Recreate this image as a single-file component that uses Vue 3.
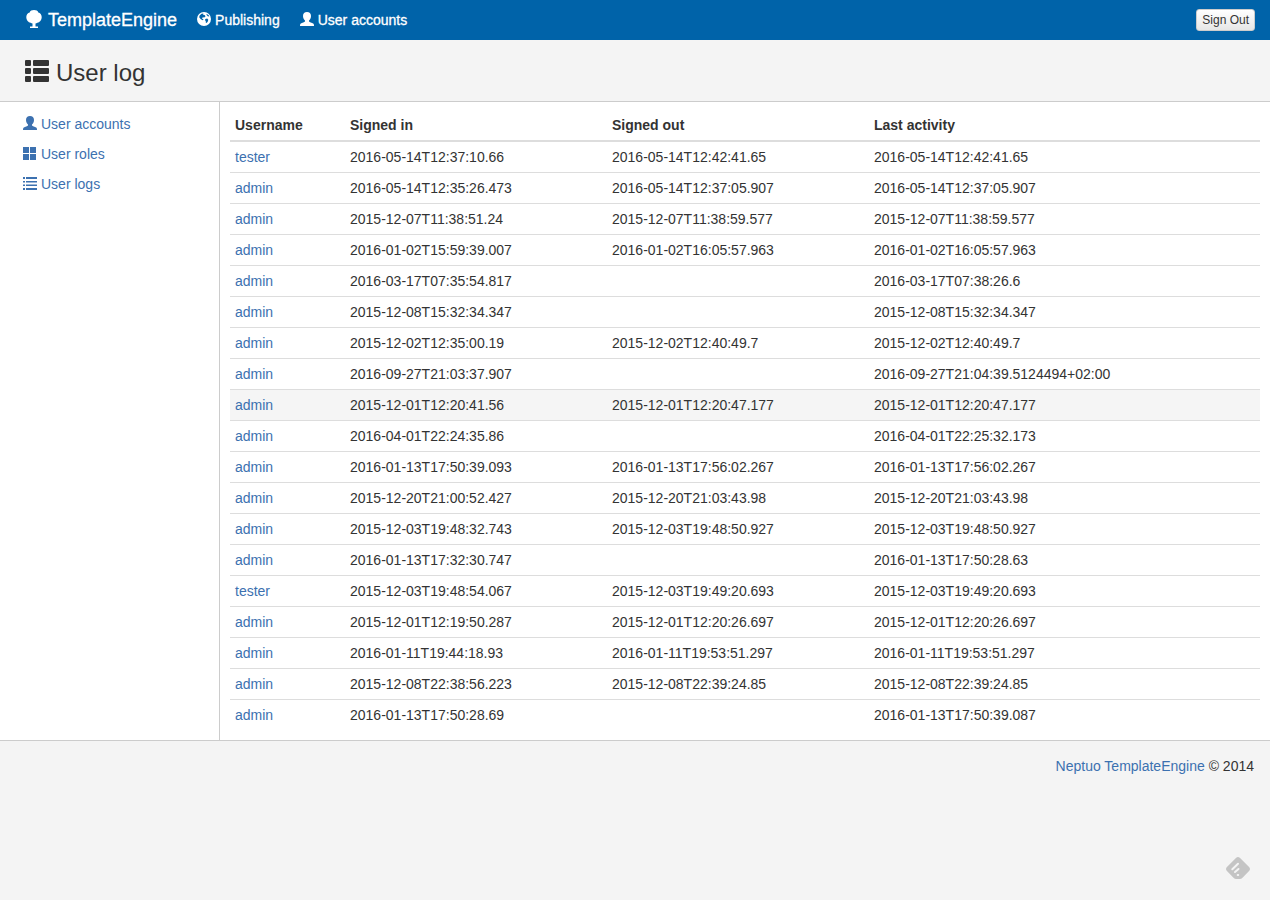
<script setup>
const rows = [
  ['tester', '2016-05-14T12:37:10.66', '2016-05-14T12:42:41.65', '2016-05-14T12:42:41.65'],
  ['admin', '2016-05-14T12:35:26.473', '2016-05-14T12:37:05.907', '2016-05-14T12:37:05.907'],
  ['admin', '2015-12-07T11:38:51.24', '2015-12-07T11:38:59.577', '2015-12-07T11:38:59.577'],
  ['admin', '2016-01-02T15:59:39.007', '2016-01-02T16:05:57.963', '2016-01-02T16:05:57.963'],
  ['admin', '2016-03-17T07:35:54.817', '', '2016-03-17T07:38:26.6'],
  ['admin', '2015-12-08T15:32:34.347', '', '2015-12-08T15:32:34.347'],
  ['admin', '2015-12-02T12:35:00.19', '2015-12-02T12:40:49.7', '2015-12-02T12:40:49.7'],
  ['admin', '2016-09-27T21:03:37.907', '', '2016-09-27T21:04:39.5124494+02:00'],
  ['admin', '2015-12-01T12:20:41.56', '2015-12-01T12:20:47.177', '2015-12-01T12:20:47.177'],
  ['admin', '2016-04-01T22:24:35.86', '', '2016-04-01T22:25:32.173'],
  ['admin', '2016-01-13T17:50:39.093', '2016-01-13T17:56:02.267', '2016-01-13T17:56:02.267'],
  ['admin', '2015-12-20T21:00:52.427', '2015-12-20T21:03:43.98', '2015-12-20T21:03:43.98'],
  ['admin', '2015-12-03T19:48:32.743', '2015-12-03T19:48:50.927', '2015-12-03T19:48:50.927'],
  ['admin', '2016-01-13T17:32:30.747', '', '2016-01-13T17:50:28.63'],
  ['tester', '2015-12-03T19:48:54.067', '2015-12-03T19:49:20.693', '2015-12-03T19:49:20.693'],
  ['admin', '2015-12-01T12:19:50.287', '2015-12-01T12:20:26.697', '2015-12-01T12:20:26.697'],
  ['admin', '2016-01-11T19:44:18.93', '2016-01-11T19:53:51.297', '2016-01-11T19:53:51.297'],
  ['admin', '2015-12-08T22:38:56.223', '2015-12-08T22:39:24.85', '2015-12-08T22:39:24.85'],
  ['admin', '2016-01-13T17:50:28.69', '', '2016-01-13T17:50:39.087'],
]
const activeRow = 8
</script>

<template>
  <div class="page">
    <nav class="navbar">
      <a href="#" class="brand">
        <svg class="icon brand-icon" viewBox="0 0 18 18" aria-hidden="true">
          <path d="M9 0C11.200 0 12.800 .8 13.300 2.400C15.200 2.800 16.700 4.600 16.700 7C16.700 10 14.700 12.500 12.400 12.800C11.700 13.300 11 13.500 10.500 13.600V16.500H13V18H5V16.500H7.500V13.600C7 13.500 6.300 13.300 5.600 12.800C3.300 12.500 1.300 10 1.300 7C1.300 4.600 2.800 2.800 4.700 2.400C5.200 .8 6.800 0 9 0Z" />
        </svg>
        <span>TemplateEngine</span>
      </a>
      <a href="#" class="nav-link">
        <svg class="icon" viewBox="0 0 14 14" aria-hidden="true">
          <circle cx="7" cy="7" r="7" />
          <path class="land" d="M4.600 1.800L6.500 1.400L5.800 2.600L7.600 2.900L8.600 4.200L7.200 5.600L5.800 5.200L5 6.500L6.600 7.600L5.800 8.300L3.800 7.200L2.200 5.200L2.600 3.600ZM9.300 1.700L11.500 3L12.300 4.600L10.800 4.300L9.800 3.200ZM8.400 7L10.200 6.600L11.300 7.800L10.800 9.600L9.700 11L8.600 10.200L8.900 9L7.900 8.200Z" />
        </svg>
        <span>Publishing</span>
      </a>
      <a href="#" class="nav-link">
        <svg class="icon" viewBox="0 0 14 14" aria-hidden="true">
          <path d="M7 0C9.500 0 11 1.500 11 4C11 6 10 7.600 9 8.500V9.500C10.300 10.400 12.700 11 13.500 11.800C14 12.400 14 13.200 14 14H0C0 13.200 0 12.400 .5 11.800C1.300 11 3.700 10.400 5 9.500V8.500C4 7.600 3 6 3 4C3 1.500 4.500 0 7 0Z" />
        </svg>
        <span>User accounts</span>
      </a>
      <button type="button" class="sign-out">Sign Out</button>
    </nav>

    <header class="heading">
      <svg class="heading-icon" viewBox="0 0 24 22" aria-hidden="true">
        <path d="M1 0H5Q6 0 6 1V5Q6 6 5 6H1Q0 6 0 5V1Q0 0 1 0ZM9 0H23Q24 0 24 1V5Q24 6 23 6H9Q8 6 8 5V1Q8 0 9 0ZM1 8H5Q6 8 6 9V13Q6 14 5 14H1Q0 14 0 13V9Q0 8 1 8ZM9 8H23Q24 8 24 9V13Q24 14 23 14H9Q8 14 8 13V9Q8 8 9 8ZM1 16H5Q6 16 6 17V21Q6 22 5 22H1Q0 22 0 21V17Q0 16 1 16ZM9 16H23Q24 16 24 17V21Q24 22 23 22H9Q8 22 8 21V17Q8 16 9 16Z" />
      </svg>
      <h1>User log</h1>
    </header>

    <div class="body">
      <aside class="sidebar">
        <a href="#">
          <svg class="icon" viewBox="0 0 14 14" aria-hidden="true">
            <path d="M7 0C9.500 0 11 1.500 11 4C11 6 10 7.600 9 8.500V9.500C10.300 10.400 12.700 11 13.500 11.800C14 12.400 14 13.200 14 14H0C0 13.200 0 12.400 .5 11.800C1.300 11 3.700 10.400 5 9.500V8.500C4 7.600 3 6 3 4C3 1.500 4.500 0 7 0Z" />
          </svg>
          <span>User accounts</span>
        </a>
        <a href="#">
          <svg class="icon" viewBox="0 0 14 14" aria-hidden="true">
            <path d="M0 1H6V7H0ZM7 1H13V7H7ZM0 8H6V14H0ZM7 8H13V14H7Z" />
          </svg>
          <span>User roles</span>
        </a>
        <a href="#">
          <svg class="icon" viewBox="0 0 14 14" aria-hidden="true">
            <path d="M0 1H2V3H0ZM3 1H14V3H3ZM0 5H2V6.500H0ZM3 5H14V6.500H3ZM0 8.500H2V10H0ZM3 8.500H14V10H3ZM0 12H2V14H0ZM3 12H14V14H3Z" />
          </svg>
          <span>User logs</span>
        </a>
      </aside>

      <main class="content">
        <table>
          <thead>
            <tr>
              <th class="col-user">Username</th>
              <th class="col-time">Signed in</th>
              <th class="col-time">Signed out</th>
              <th>Last activity</th>
            </tr>
          </thead>
          <tbody>
            <tr v-for="(row, i) in rows" :key="i" :class="{ active: i === activeRow }">
              <td><a href="#">{{ row[0] }}</a></td>
              <td>{{ row[1] }}</td>
              <td>{{ row[2] }}</td>
              <td>{{ row[3] }}</td>
            </tr>
          </tbody>
        </table>
      </main>
    </div>

    <footer class="footer">
      <a href="#">Neptuo TemplateEngine</a> © 2014
    </footer>

    <a href="#" class="feed" aria-label="Feedly">
      <svg viewBox="0 0 24 22" aria-hidden="true">
        <path class="tile" d="M10.200 .8Q12 -.8 13.800 .8L23.300 10.200Q24.700 12 23.300 13.700L16.500 20.700Q15.300 22 13.800 22H10.200Q8.700 22 7.500 20.700L.7 13.700Q-.7 12 .7 10.200Z" />
        <path class="mark" d="M6.300 12.200L12 6.700M9 15L12.500 12M11.700 18H12.200" />
      </svg>
    </a>
  </div>
</template>

<style>
body {
  margin: 0;
  background: #f4f4f4;
}
</style>

<style scoped>
.page {
  font-family: "Liberation Sans", Arial, sans-serif;
  font-size: 14px;
  line-height: 20px;
  color: #333;
}

a {
  color: #3c71b0;
  text-decoration: none;
}

.icon {
  width: 14px;
  height: 14px;
  margin-bottom: 2px;
  flex: none;
  fill: currentColor;
}

.navbar {
  display: flex;
  align-items: center;
  gap: 20px;
  height: 40px;
  padding: 0 15px 0 25px;
  background: #0063a9;
}

.brand,
.nav-link {
  display: flex;
  align-items: center;
  gap: 4px;
  color: #fff;
  -webkit-text-stroke: 0.3px #fff;
}

.brand {
  gap: 5px;
  font-size: 18px;
}

.brand-icon {
  width: 18px;
  height: 18px;
}

.land {
  fill: #0063a9;
}

.sign-out {
  height: 22px;
  margin-left: auto;
  padding: 0 5px;
  border: 1px solid #ccc;
  border-radius: 3px;
  background: linear-gradient(#fff, #e6e6e6);
  color: #333;
  font: 12px "Liberation Sans", Arial, sans-serif;
}

.heading {
  display: flex;
  align-items: center;
  gap: 7px;
  height: 61px;
  padding: 0 25px;
  border-bottom: 1px solid #ccc;
}

.heading-icon {
  width: 24px;
  height: 22px;
  fill: #333;
}

h1 {
  margin: 4px 0 0;
  font-size: 24px;
  font-weight: 400;
  line-height: 28px;
}

.body {
  display: flex;
  border-bottom: 1px solid #ccc;
  background: #fff;
}

.sidebar {
  box-sizing: border-box;
  flex: 0 0 220px;
  display: flex;
  flex-direction: column;
  gap: 10px;
  padding: 12px 23px;
  border-right: 1px solid #ccc;
}

.sidebar a {
  display: flex;
  align-items: center;
  gap: 4px;
}

.content {
  flex: 1;
  padding: 8px 10px 10px;
}

table {
  width: 100%;
  border-collapse: separate;
  border-spacing: 0;
}

th,
td {
  height: 20px;
  padding: 5px;
  text-align: left;
}

th {
  border-bottom: 2px solid #ddd;
}

tbody tr + tr td {
  border-top: 1px solid #ddd;
}

.active td {
  background: #f5f5f5;
}

.col-user {
  width: 105px;
}

.col-time {
  width: 252px;
}

.footer {
  padding: 15px 16px;
  text-align: right;
}

.feed {
  position: fixed;
  right: 20px;
  bottom: 21px;
  display: flex;
}

.feed svg {
  width: 24px;
  height: 22px;
}

.tile {
  fill: #c4c4c4;
}

.mark {
  fill: none;
  stroke: #f4f4f4;
  stroke-width: 2;
  stroke-linecap: round;
}
</style>
